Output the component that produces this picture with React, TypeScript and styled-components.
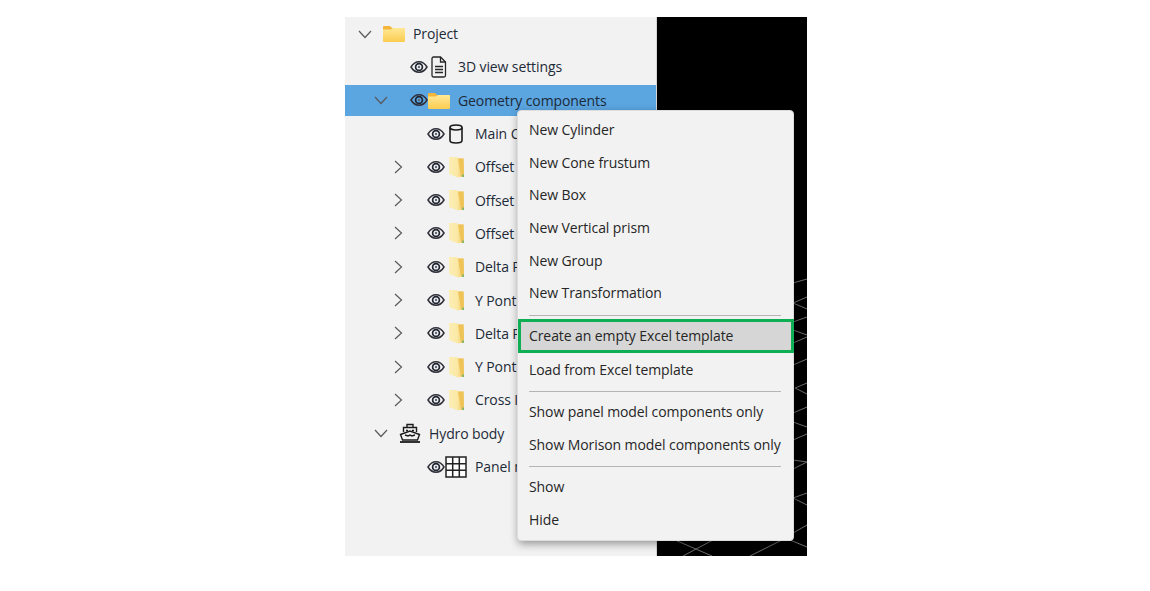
import React, { FC } from "react";
import styled, { createGlobalStyle } from "styled-components";

const GlobalStyle = createGlobalStyle`
  html, body {
    margin: 0;
    padding: 0;
    background: #fff;
  }
`;

const Page = styled.div`
  width: 1150px;
  height: 591px;
  padding: 17px 0 0 345px;
  box-sizing: border-box;
  overflow: hidden;
`;

const Frame = styled.div`
  position: relative;
  display: flex;
  width: 462px;
  height: 539px;
  font-family: "Open Sans", "Noto Sans", sans-serif;
`;

const TreePanel = styled.div`
  width: 311px;
  background: #f2f2f2;
  border-right: 1px solid #d4d4d4;
`;

const Row = styled.div<{ $indent: number; $selected?: boolean }>`
  display: flex;
  align-items: center;
  height: ${(p) => (p.$selected ? "31.3px" : "33.3px")};
  margin: ${(p) => (p.$selected ? "1px 0" : "0")};
  padding-left: ${(p) => p.$indent}px;
  background: ${(p) => (p.$selected ? "#5ba5e0" : "transparent")};
  color: #1d2a38;
  font-size: 14px;
  letter-spacing: -0.1px;
  white-space: nowrap;
  overflow: hidden;
`;

const Chevron = styled.span`
  display: flex;
  width: 14px;
  height: 14px;
  flex: none;
`;

const Slot = styled.span<{ $w: number }>`
  display: flex;
  align-items: center;
  justify-content: center;
  width: ${(p) => p.$w}px;
  flex: none;
`;

const Label = styled.span`
  margin-left: 8px;
`;

const Viewport = styled.div`
  position: relative;
  flex: 1;
  background: #000;
`;

const Mesh = styled.svg`
  position: absolute;
  right: 0;
  bottom: 0;
`;

const Menu = styled.div`
  position: absolute;
  left: 172px;
  top: 93px;
  width: 277px;
  height: 431px;
  padding: 2px 0;
  box-sizing: border-box;
  background: #f2f2f2;
  border-radius: 4px;
  border: 1px solid #dcdcdc;
  box-shadow: 1px 3px 8px rgba(0, 0, 0, 0.38);
  display: flex;
  flex-direction: column;
  color: #262626;
  font-size: 14px;
  letter-spacing: -0.09px;
`;

const MenuItem = styled.div<{ $marked?: boolean }>`
  display: flex;
  align-items: center;
  flex: none;
  height: ${(p) => (p.$marked ? "34.5px" : "32.7px")};
  padding-left: ${(p) => (p.$marked ? "8px" : "11px")};
  margin-right: ${(p) => (p.$marked ? "-1px" : "0")};
  white-space: nowrap;
  box-sizing: border-box;
  background: ${(p) => (p.$marked ? "#d6d6d6" : "transparent")};
  border: ${(p) => (p.$marked ? "3px solid #0fae52" : "none")};
`;

const Separator = styled.div`
  height: 1px;
  margin: 5.5px 12px 3px 11px;
  background: #b4b4b4;
  flex: none;
`;

const Down: FC = () => (
  <Chevron>
    <svg width="14" height="14" viewBox="0 0 14 14" fill="none" stroke="#5a5a5a" strokeWidth="1.2">
      <path d="M1 4l6 6.500 6-6.500" />
    </svg>
  </Chevron>
);

const Right: FC = () => (
  <Chevron>
    <svg width="14" height="14" viewBox="0 0 14 14" fill="none" stroke="#5a5a5a" strokeWidth="1.2">
      <path d="M4 1l6.500 6-6.500 6" />
    </svg>
  </Chevron>
);

const Eye: FC = () => (
  <svg width="18" height="14" viewBox="0 0 18 14" fill="none">
    <path d="M1 7c2-3.400 4.800-5.200 8-5.200s6 1.800 8 5.200c-2 3.400-4.800 5.200-8 5.200s-6-1.800-8-5.200z" stroke="#30303a" strokeWidth="1.5" />
    <circle cx="9" cy="7" r="3.400" fill="none" stroke="#1f2430" strokeWidth="1.7" />
    <circle cx="9" cy="7" r="1.200" fill="#5f6a78" />
  </svg>
);

const OpenFolder: FC = () => (
  <svg width="22" height="17" viewBox="0 0 22 17">
    <defs>
      <linearGradient id="folderBody" x1="0" y1="0" x2="0" y2="1">
        <stop offset="0" stopColor="#ffe995" />
        <stop offset="1" stopColor="#fccb50" />
      </linearGradient>
    </defs>
    <path d="M0 2a1 1 0 0 1 1-1h6l2 2h12a1 1 0 0 1 1 1v2H0z" fill="#f3b63a" />
    <path d="M0 4.500h8l2-1.500h11a1 1 0 0 1 1 1v12a1 1 0 0 1-1 1H1a1 1 0 0 1-1-1z" fill="url(#folderBody)" />
  </svg>
);

const ClosedFolder: FC = () => (
  <svg width="17" height="22" viewBox="0 0 17 22">
    <defs>
      <linearGradient id="folderFront" x1="0" y1="0" x2="1" y2="0">
        <stop offset="0" stopColor="#fbeeb8" />
        <stop offset="0.55" stopColor="#fbe8a4" />
        <stop offset="1" stopColor="#f0c860" />
      </linearGradient>
    </defs>
    <path d="M1 1h8l1 1.500h5.500L16 20l-6 1.500L1 18z" fill="url(#folderFront)" />
    <path d="M10 2.500h5.500L16 20l-3 .8z" fill="#eec458" />
    <path d="M14 18.500h2V21h-2z" fill="#8ab866" />
  </svg>
);

const Doc: FC = () => (
  <svg width="16" height="22" viewBox="0 0 16 22" fill="none" stroke="#262626" strokeWidth="1.3">
    <path d="M2.500 1h7l5 5v13.500a1.500 1.500 0 0 1-1.500 1.500H2.500A1.500 1.500 0 0 1 1 19.500v-17A1.500 1.500 0 0 1 2.500 1z" />
    <path d="M9.500 1v5h5M4 10.500h8M4 13.500h8M4 16.500h8" />
  </svg>
);

const Cylinder: FC = () => (
  <svg width="14" height="20" viewBox="0 0 14 20" fill="none" stroke="#1c1c1c" strokeWidth="1.6">
    <ellipse cx="7" cy="3.500" rx="6" ry="2.500" />
    <path d="M1 3.500v13c0 1.400 2.700 2.500 6 2.500s6-1.100 6-2.500v-13" />
  </svg>
);

const Ship: FC = () => (
  <svg width="22" height="20" viewBox="0 0 22 20" fill="none" stroke="#1c1c1c" strokeWidth="1.4">
    <path d="M8 4.500V1.500h6v3M4.500 9V4.500h13V9" />
    <path d="M1.500 11.500L11 8l9.500 3.500-2 5.500h-15z" />
    <path d="M7 7.500h2M13 7.500h2M6 12l3 1 2-1 2 1 3-1" />
    <path d="M1 19h20" strokeWidth="1.8" />
  </svg>
);

const Grid: FC = () => (
  <svg width="22" height="22" viewBox="0 0 22 22" fill="#fff" stroke="#222" strokeWidth="1.5">
    <rect x="1" y="1" width="20" height="20" />
    <path d="M7.700 1v20M14.300 1v20M1 7.700h20M1 14.300h20" />
  </svg>
);

type TreeRow = {
  label: string;
  indent: number;
  chevron?: "down" | "right";
  eye?: boolean;
  icon: React.ReactNode;
  selected?: boolean;
};

const rows: TreeRow[] = [
  { label: "Project", indent: 13, chevron: "down", icon: <OpenFolder /> },
  { label: "3D view settings", indent: 64, eye: true, icon: <Doc /> },
  { label: "Geometry components", indent: 29, chevron: "down", eye: true, icon: <OpenFolder />, selected: true },
  { label: "Main C", indent: 81, eye: true, icon: <Cylinder /> },
  { label: "Offset", indent: 46, chevron: "right", eye: true, icon: <ClosedFolder /> },
  { label: "Offset", indent: 46, chevron: "right", eye: true, icon: <ClosedFolder /> },
  { label: "Offset", indent: 46, chevron: "right", eye: true, icon: <ClosedFolder /> },
  { label: "Delta P", indent: 46, chevron: "right", eye: true, icon: <ClosedFolder /> },
  { label: "Y Pont", indent: 46, chevron: "right", eye: true, icon: <ClosedFolder /> },
  { label: "Delta P", indent: 46, chevron: "right", eye: true, icon: <ClosedFolder /> },
  { label: "Y Pont", indent: 46, chevron: "right", eye: true, icon: <ClosedFolder /> },
  { label: "Cross I", indent: 46, chevron: "right", eye: true, icon: <ClosedFolder /> },
  { label: "Hydro body", indent: 29, chevron: "down", icon: <Ship /> },
  { label: "Panel m", indent: 81, eye: true, icon: <Grid /> },
];

const TreeLine: FC<TreeRow> = ({ label, indent, chevron, eye, icon, selected }) => (
  <Row $indent={indent} $selected={selected}>
    {chevron === "down" && <Down />}
    {chevron === "right" && <Right />}
    {chevron && <Slot $w={eye ? 21 : 11} />}
    {eye && (
      <Slot $w={19}>
        <Eye />
      </Slot>
    )}
    <Slot $w={22}>{icon}</Slot>
    <Label>{label}</Label>
  </Row>
);

export default function App() {
  return (
    <Page>
      <GlobalStyle />
      <Frame>
        <TreePanel>
          {rows.map((row, i) => (
            <TreeLine key={i} {...row} />
          ))}
        </TreePanel>
        <Viewport>
          <Mesh width="150" height="280" viewBox="0 0 150 280" fill="none" stroke="#6e6e6e" strokeWidth="1">
            <path d="M136 7l14-4M150 21l-14 6 14 6M136 46l14-5M136 54l14 5M136 67l14-6M136 89l14-6M150 107l-12 5 12 6M136 137l14-6M136 146l14 5M136 164l14-6M136 184l14 2-14 7M150 217l-14 5 14 7M136 257l14-8M133 264l17 7" />
            <path d="M18 264l37 16M56 264l-30 16M125 264l-32 16" />
          </Mesh>
        </Viewport>
        <Menu>
          <MenuItem>New Cylinder</MenuItem>
          <MenuItem>New Cone frustum</MenuItem>
          <MenuItem>New Box</MenuItem>
          <MenuItem>New Vertical prism</MenuItem>
          <MenuItem>New Group</MenuItem>
          <MenuItem>New Transformation</MenuItem>
          <Separator />
          <MenuItem $marked>Create an empty Excel template</MenuItem>
          <MenuItem>Load from Excel template</MenuItem>
          <Separator />
          <MenuItem>Show panel model components only</MenuItem>
          <MenuItem>Show Morison model components only</MenuItem>
          <Separator />
          <MenuItem>Show</MenuItem>
          <MenuItem>Hide</MenuItem>
        </Menu>
      </Frame>
    </Page>
  );
}
